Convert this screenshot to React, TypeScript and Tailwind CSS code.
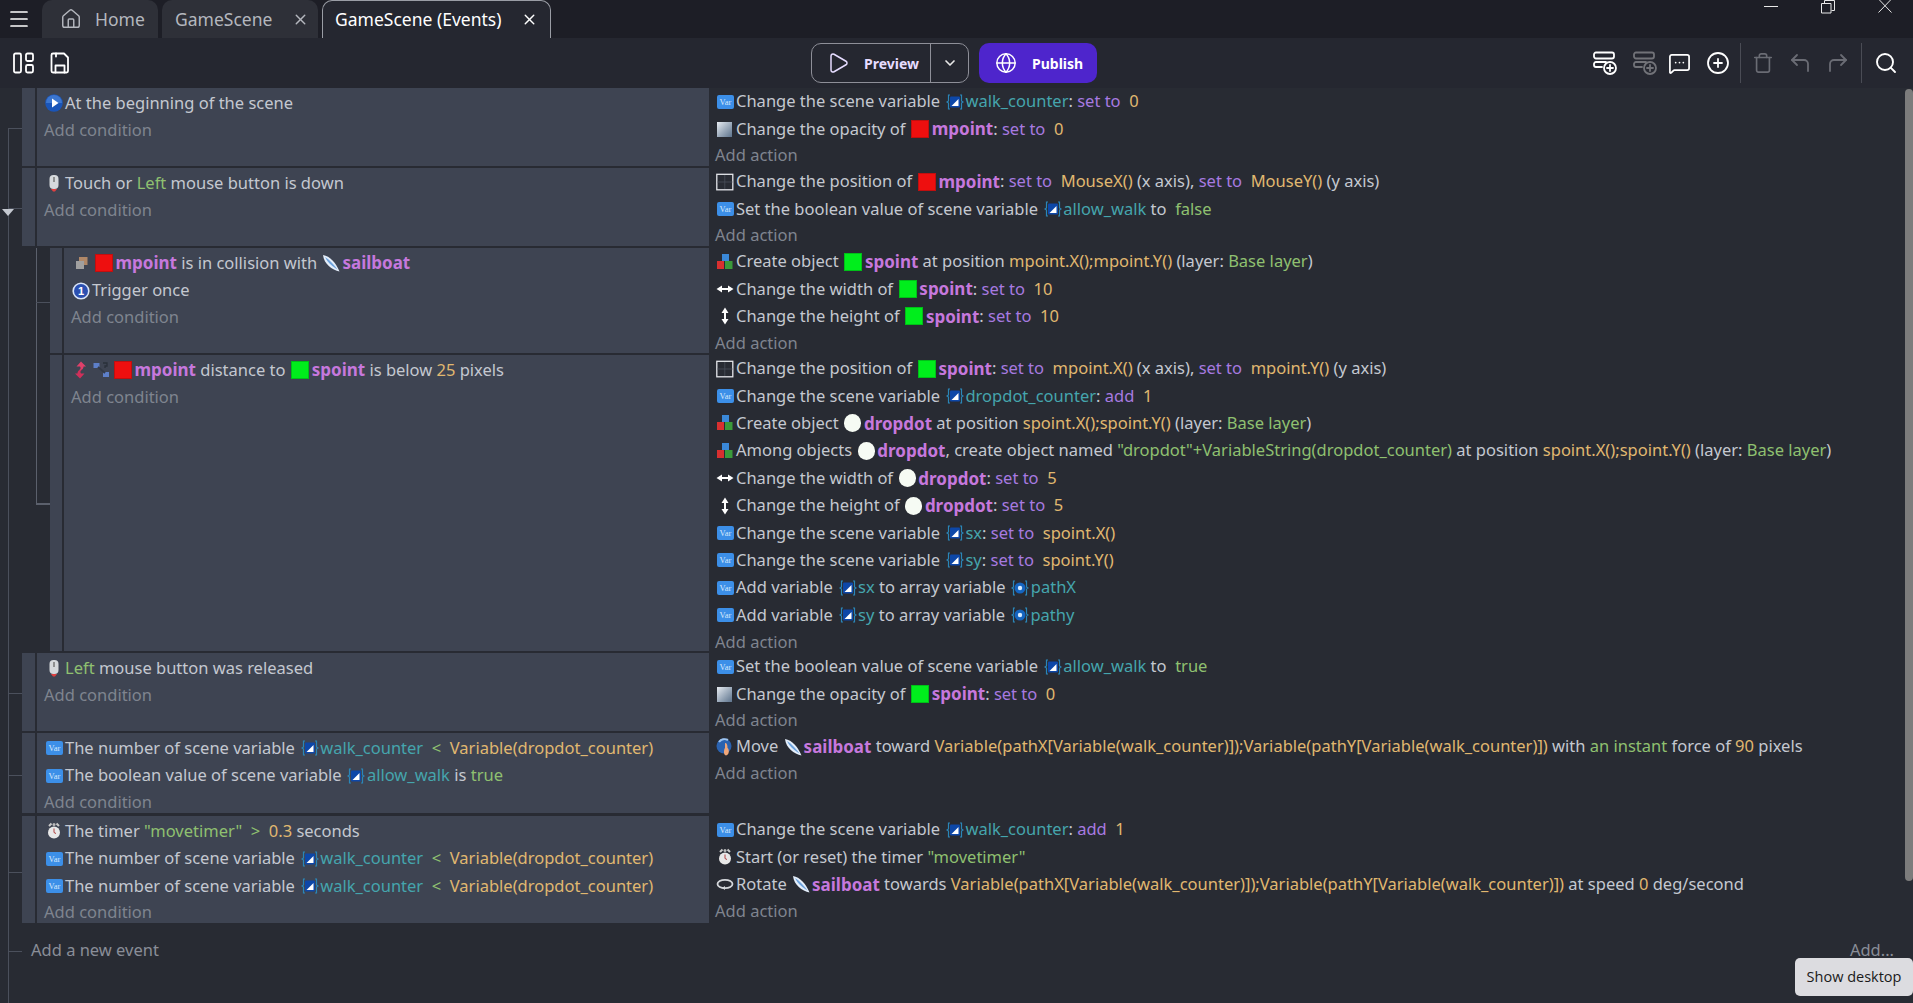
import React from "react";
import { Menu, Home, X, Play, ChevronDown, Globe, Search, Trash, CornerUpLeft, CornerUpRight, CirclePlus, MessageSquareMore } from "lucide-react";

type P = { children?: React.ReactNode };
const O = ({ children }: P) => <span className="font-bold text-[17px] text-[#c678dd]">{children}</span>;
const V = ({ children }: P) => <span className="text-[#a77ae0]">{children}</span>;
const N = ({ children }: P) => <span className="text-[#e0b870]">{children}</span>;
const G = ({ children }: P) => <span className="text-[#8fc070]">{children}</span>;
const C = ({ children }: P) => <span className="text-[#45a5ad]">{children}</span>;

const Box = ({ w = 18, children }: { w?: number; children: React.ReactNode }) => (
  <svg width={w} height="18" viewBox={`0 0 ${w} 18`} className="shrink-0">{children}</svg>
);
const VarI = () => (
  <span className="shrink-0 w-[17px] h-[14px] mr-[2px] ml-[2px] rounded-[2px] bg-[#3c8fe8] text-[#d8e8fb] text-[8.5px] leading-[14px] text-center font-['Liberation_Serif',serif]">Var</span>
);
const Ref = () => (
  <span className="shrink-0 ml-[1.5px] mr-[1.5px] flex">
    <Box>
      <path d="M4 2H2.500V8L1 9l1.500 1v6H4M14 2h1.500V8L17 9l-1.500 1v6H14" fill="none" stroke="#2a86b8" strokeWidth="1.200" />
      <rect x="4" y="3.500" width="10" height="11" rx="1" fill="#0d47a8" />
      <path d="M5.500 13l7-7v7z" fill="#ffffff" />
    </Box>
  </span>
);
const Arr = () => (
  <span className="shrink-0 ml-[1.5px] mr-[1.5px] flex">
    <Box>
      <path d="M4 2H2.500V8L1 9l1.500 1v6H4M14 2h1.500V8L17 9l-1.500 1v6H14" fill="none" stroke="#2a86b8" strokeWidth="1.200" />
      <circle cx="9" cy="9" r="5.500" fill="#1565c0" />
      <circle cx="9" cy="9" r="2.200" fill="#d8ecff" />
    </Box>
  </span>
);
const Obj = ({ c }: { c: "r" | "g" }) => (
  <span className={`shrink-0 w-[18px] h-[18px] ml-[1.5px] mr-[2.5px] border ${c === "r" ? "bg-[#ee0f0f] border-[#c00f0f]" : "bg-[#00ee1c] border-[#00c018]"}`} />
);
const Dot = () => <span className="shrink-0 w-[17px] h-[18px] ml-[1.5px] mr-[2.5px] rounded-full bg-[#f6fbf4]" />;
const Boat = () => (
  <span className="shrink-0 mr-[2px] ml-[1px] flex">
    <Box>
      <path d="M1 1C8 2 14 9 17.500 17.500C10 16 2 10 1 1z" fill="#e4eefa" />
      <path d="M3 3C8 6 12 11 15.500 15.500C11 13 6 9 3 3z" fill="#6fa4de" />
    </Box>
  </span>
);
const Start = () => (
  <span className="shrink-0 ml-[1px] mr-[2px] flex">
    <Box>
      <circle cx="9" cy="9" r="8.800" fill="#1a55b8" />
      <path d="M1 9a8 8 0 0 1 16 0" fill="#5d98e6" opacity=".5" />
      <path d="M7 4.500l6.500 4.500L7 13.500z" fill="#fff" />
    </Box>
  </span>
);
const Mouse = () => (
  <span className="shrink-0 ml-[1px] mr-[2px] flex">
    <Box>
      <rect x="4.500" y="1" width="9" height="14" rx="4" fill="#d6d9dc" />
      <path d="M9 3v5" stroke="#777" strokeWidth="1.500" />
      <path d="M6 15h6l-2 2.500H8z" fill="#e04040" />
    </Box>
  </span>
);
const Collide = () => (
  <span className="shrink-0 ml-[4px] mr-[4.5px] flex">
    <Box w={14}>
      <rect x="4" y="3" width="8.500" height="8" fill="#b08868" />
      <rect x="1" y="7" width="8" height="8" fill="#a0a0a0" />
    </Box>
  </span>
);
const Once = () => (
  <span className="shrink-0 ml-[1px] mr-[2px] flex">
    <Box>
      <circle cx="9" cy="9" r="8.600" fill="#d8e4f8" />
      <circle cx="9" cy="9" r="7" fill="#2a4fb0" />
      <text x="9" y="13" textAnchor="middle" fontSize="11" fontWeight="700" fill="#fff" fontFamily="Liberation Sans, sans-serif">1</text>
    </Box>
  </span>
);
const Dist = () => (
  <span className="shrink-0 ml-[2px] mr-[3.5px] flex gap-[5px]">
    <Box w={15}>
      <path d="M8 0.500l5 5h-2.500c0 2-1.500 4-5 4C8 8 8 7 7 5.500H3.500z" fill="#e0406a" />
      <path d="M7 17.500l-5-5h2.500c0-2 1.500-4 5-4C7 10 7 11 8 12.500h3.500z" fill="#d0305a" />
    </Box>
    <Box w={16}>
      <rect x="0.500" y="2" width="6" height="5" fill="#5d7fc8" />
      <rect x="10" y="11" width="6" height="5" fill="#5d7fc8" />
      <path d="M5 6l7 6" stroke="#333a46" strokeWidth="2" />
      <path d="M10 2h4v3h-2v2" fill="none" stroke="#2a303a" strokeWidth="1.300" />
    </Box>
  </span>
);
const Opacity = () => (
  <span className="shrink-0 ml-[2px] mr-[4px] w-[15px] h-[15px] bg-gradient-to-br from-[#e8edf2] to-[#5d738c]" />
);
const Pos = () => (
  <span className="shrink-0 ml-[1px] mr-[2px] flex">
    <Box>
      <rect x="0.800" y="1.300" width="16" height="15.500" fill="none" stroke="#e4e6ea" strokeWidth="1.300" />
      <path d="M8.800 2v14M1.500 9h15" stroke="#4a4f5a" strokeWidth=".8" />
    </Box>
  </span>
);
const Create = () => (
  <span className="shrink-0 ml-[1px] mr-[2px] flex">
    <Box>
      <rect x="6" y="1" width="7" height="7" fill="#3a88d8" />
      <rect x="1" y="8" width="7" height="8" fill="#d83030" />
      <rect x="9" y="8" width="7.500" height="8" fill="#3a9a3a" />
    </Box>
  </span>
);
const W = () => (
  <span className="shrink-0 ml-[1px] mr-[2px] flex">
    <Box>
      <path d="M5 9h8" stroke="#fff" strokeWidth="2" />
      <path d="M0.500 9L6 5.500v7zM17.500 9L12 5.500v7z" fill="#fff" />
    </Box>
  </span>
);
const H = () => (
  <span className="shrink-0 ml-[1px] mr-[2px] flex">
    <Box>
      <path d="M9 5v8" stroke="#fff" strokeWidth="2" />
      <path d="M9 0.500L5.500 6h7zM9 17.500L5.500 12h7z" fill="#fff" />
    </Box>
  </span>
);
const MoveI = () => (
  <span className="shrink-0 ml-[1px] mr-[2px] flex">
    <Box>
      <circle cx="8" cy="8" r="7.500" fill="#2a62b0" />
      <path d="M3 4a7 7 0 0 1 9-2" stroke="#9cc2ee" strokeWidth="2" fill="none" />
      <path d="M9 5c2 0 2.500 2 2.500 5c2 1 2 7-1.500 7.500C7 17 8 11 9 10z" fill="#f0a678" />
    </Box>
  </span>
);
const Rot = () => (
  <span className="shrink-0 ml-[1px] mr-[2px] flex">
    <Box>
      <ellipse cx="9" cy="9" rx="7.500" ry="4.200" fill="none" stroke="#d5d8dc" strokeWidth="1.800" />
      <path d="M6 13l3-2v4z" fill="#d5d8dc" />
    </Box>
  </span>
);
const Clock = () => (
  <span className="shrink-0 ml-[1px] mr-[2px] flex">
    <Box>
      <path d="M4 4l2.500-2.500M14 4l-2.500-2.500" stroke="#c8c8c8" strokeWidth="2" />
      <circle cx="9" cy="10.500" r="6" fill="#e8e8e8" />
      <path d="M9 6.500v4l2 1" fill="none" stroke="#b04040" strokeWidth="1" />
      <circle cx="9" cy="2.500" r="1.500" fill="#bbb" />
    </Box>
  </span>
);

const CL = ({ children }: P) => <div className="flex items-center h-[27.4px] whitespace-pre">{children}</div>;
const AddL = ({ children }: P) => <div className="flex items-center h-[26px] text-[#7f848f]">{children}</div>;

const Row = ({
  sub = false,
  h,
  mb = "mb-[2px]",
  conds,
  acts,
}: {
  sub?: boolean;
  h: string;
  mb?: string;
  conds: React.ReactNode;
  acts: React.ReactNode;
}) => (
  <div className={`flex ${h} ${mb}`}>
    <div className={`w-[709px] shrink-0 flex gap-[2px] ${sub ? "pl-[50px]" : "pl-[22px]"}`}>
      <div className={`${sub ? "w-[12px]" : "w-[13px]"} bg-[#3e4452]`} />
      <div className="flex-1 min-w-0 bg-[#3e4452] pl-[7px] pt-[1.5px]">
        {conds}
        <AddL>Add condition</AddL>
      </div>
    </div>
    <div className="flex-1 min-w-0 pl-[6px]">
      {acts}
      <AddL>Add action</AddL>
    </div>
  </div>
);

const NumWalk = () => (
  <CL>
    <VarI />
    The number of scene variable <Ref /><C>walk_counter</C>
    <G>{"  <  "}</G>
    <N>Variable(dropdot_counter)</N>
  </CL>
);
const Svg24 = ({ children, op = 1 }: { children: React.ReactNode; op?: number }) => (
  <svg width="24" height="24" viewBox="0 0 24 24" fill="none" stroke="currentColor" strokeWidth="1.800" strokeLinecap="round" strokeLinejoin="round" opacity={op}>
    {children}
  </svg>
);
const AddEv = () => (
  <>
    <rect x="1" y="1.500" width="20" height="6" rx="2" />
    <path d="M13 11H3a2 2 0 0 0-2 2v1a2 2 0 0 0 2 2h6" />
    <circle cx="17" cy="17" r="6" />
    <path d="M17 14v6M14 17h6" />
  </>
);

export default function App() {
  return (
    <div className="h-screen w-full overflow-hidden flex flex-col bg-[#282b33] text-[#c4c8d0] text-[16.5px] font-['Noto_Sans','Open_Sans',sans-serif] relative">
      {/* title bar */}
      <div className="h-[38px] shrink-0 bg-[#1d1e26] flex items-start text-[17.5px]">
        <div className="w-[42px] h-[38px] flex items-center pl-[7px] text-white">
          <Menu size={24} strokeWidth={1.7} />
        </div>
        <div className="flex gap-[4px]">
          <div className="w-[116px] h-[38px] shrink-0 flex items-center rounded-t-[10px] bg-[#2e3038] text-[#b4b7be]">
            <span className="ml-[18px] mr-[13px] flex"><Home size={22} strokeWidth={1.600} /></span>
            Home
          </div>
          <div className="w-[156px] h-[38px] shrink-0 flex items-center rounded-t-[10px] bg-[#2e3038] text-[#b4b7be] pl-[13px]">
            GameScene
            <X size={17} className="ml-[20px]" />
          </div>
          <div className="w-[229px] h-[38px] shrink-0 flex items-center rounded-t-[10px] bg-[#252730] border border-b-0 border-[#9a9da5] text-white pl-[12px]">
            GameScene (Events)
            <X size={17} className="ml-[20px]" />
          </div>
        </div>
        <div className="ml-auto flex items-start text-[#e8e8e8] pr-[21px] gap-[43px]">
          <svg width="14" height="14" viewBox="0 0 14 14"><path d="M0 6.500h14" stroke="currentColor" strokeWidth="1" /></svg>
          <svg width="14" height="14" viewBox="0 0 14 14"><path d="M.5 3.500h9.500v9.500H.5zM3.500 3V.5H13.500V10.500H10.500" fill="none" stroke="currentColor" strokeWidth="1" /></svg>
          <svg width="14" height="14" viewBox="0 0 14 14"><path d="M.5 -1L13.500 12.500M13.500 -1L.5 12.500" stroke="currentColor" strokeWidth="1" /></svg>
        </div>
      </div>
      {/* toolbar */}
      <div className="h-[50px] shrink-0 bg-[#252730] flex items-center relative text-white">
        <div className="flex items-center pl-[11px] gap-[13px]">
          <Svg24>
            <rect x="3" y="2.500" width="7" height="19" rx="1.500" />
            <rect x="15" y="2.500" width="7" height="7.500" rx="1.500" />
            <rect x="15" y="14" width="7" height="7.500" rx="1.500" />
          </Svg24>
          <Svg24>
            <path d="M5 2.500h11l4 4V20a1.500 1.500 0 0 1-1.500 1.500h-13.500A1.500 1.500 0 0 1 3.500 20V4A1.500 1.500 0 0 1 5 2.500z" />
            <path d="M7.500 21.500v-7h9v7M8 2.500v3" />
          </Svg24>
        </div>
        <div className="absolute left-[811px] top-[5px] flex gap-[10px]">
          <div className="w-[158px] h-[40px] rounded-[10px] border border-[#8e8f98] flex items-center">
            <div className="w-[119px] h-full flex items-center pl-[14px] gap-[14px] border-r border-[#8e8f98] text-[#e6dcff]">
              <Play size={24} strokeWidth={1.500} />
              <span className="text-[14px] font-bold">Preview</span>
            </div>
            <div className="flex-1 flex justify-center text-[#e8e8e8]"><ChevronDown size={16} strokeWidth={2.500} /></div>
          </div>
          <div className="w-[118px] h-[40px] rounded-[10px] bg-[#4e25cc] flex items-center pl-[16px] gap-[15px]">
            <Globe size={22} strokeWidth={1.600} />
            <span className="text-[14px] font-bold">Publish</span>
          </div>
        </div>
        <div className="ml-auto flex items-center pr-[15px] h-[40px]">
          <div className="flex items-center pr-[10px] border-r border-[#4a4c55] h-full">
            <Svg24><AddEv /></Svg24>
            <span className="opacity-35 flex ml-[16px]"><Svg24><AddEv /></Svg24></span>
            <MessageSquareMore size={23} strokeWidth={1.800} className="ml-[11px]" />
            <CirclePlus size={24} strokeWidth={1.800} className="ml-[15px]" />
          </div>
          <div className="flex items-center gap-[14px] px-[11px] border-r border-[#4a4c55] h-full text-[#6a6c74]">
            <Trash size={22} strokeWidth={1.800} />
            <CornerUpLeft size={24} strokeWidth={1.800} />
            <CornerUpRight size={24} strokeWidth={1.800} />
          </div>
          <Search size={24} strokeWidth={1.900} className="ml-[12px]" />
        </div>
      </div>
      {/* sheet */}
      <div className="flex-1 min-h-0 flex relative">
        <div className="flex-1 min-w-0 relative">
          {/* tree connectors */}
          <div className="absolute left-[8px] top-[40px] bottom-0 w-px bg-[#4b505c]" />
          <div className="absolute left-[8px] top-[40px] w-[14px] h-px bg-[#4b505c]" />
          <div className="absolute left-[8px] top-[120px] w-[14px] h-px bg-[#4b505c]" />
          <div className="absolute left-[2px] top-[121px] border-x-[6px] border-x-transparent border-t-[7px] border-t-[#c4c8d0]" />
          <div className="absolute left-[36px] top-[160px] w-[14px] h-[257px] border-l border-b-2 border-[#5b606c]" />
          <div className="absolute left-[36px] top-[214px] w-[14px] h-px bg-[#4b505c]" />
          <div className="absolute left-[8px] top-[605px] w-[14px] h-px bg-[#4b505c]" />
          <div className="absolute left-[8px] top-[687px] w-[14px] h-px bg-[#4b505c]" />
          <div className="absolute left-[8px] top-[784px] w-[14px] h-px bg-[#4b505c]" />
          <div className="absolute left-[8px] top-[863px] w-[14px] h-px bg-[#4b505c]" />

          <Row
            h="h-[78px]"
            conds={<CL><Start />At the beginning of the scene</CL>}
            acts={
              <>
                <CL><VarI />Change the scene variable <Ref /><C>walk_counter</C>: <V>set to </V><N> 0</N></CL>
                <CL><Opacity />Change the opacity of <Obj c="r" /><O>mpoint</O>: <V>set to </V><N> 0</N></CL>
              </>
            }
          />
          <Row
            h="h-[78px]"
            conds={<CL><Mouse />Touch or <G>Left</G> mouse button is down</CL>}
            acts={
              <>
                <CL><Pos />Change the position of <Obj c="r" /><O>mpoint</O>: <V>set to </V><N> MouseX()</N> (x axis), <V>set to </V><N> MouseY()</N> (y axis)</CL>
                <CL><VarI />Set the boolean value of scene variable <Ref /><C>allow_walk</C> to <G> false</G></CL>
              </>
            }
          />
          <Row
            sub
            h="h-[105px]"
            conds={
              <>
                <CL><Collide /><Obj c="r" /><O>mpoint</O> is in collision with <Boat /><O>sailboat</O></CL>
                <CL><Once />Trigger once</CL>
              </>
            }
            acts={
              <>
                <CL><Create />Create object <Obj c="g" /><O>spoint</O> at position <N>mpoint.X();mpoint.Y()</N> (layer: <G>Base layer</G>)</CL>
                <CL><W />Change the width of <Obj c="g" /><O>spoint</O>: <V>set to </V><N> 10</N></CL>
                <CL><H />Change the height of <Obj c="g" /><O>spoint</O>: <V>set to </V><N> 10</N></CL>
              </>
            }
          />
          <Row
            sub
            h="h-[296px]"
            conds={<CL><Dist /><Obj c="r" /><O>mpoint</O> distance to <Obj c="g" /><O>spoint</O> is below <N>25</N> pixels</CL>}
            acts={
              <>
                <CL><Pos />Change the position of <Obj c="g" /><O>spoint</O>: <V>set to </V><N> mpoint.X()</N> (x axis), <V>set to </V><N> mpoint.Y()</N> (y axis)</CL>
                <CL><VarI />Change the scene variable <Ref /><C>dropdot_counter</C>: <V>add </V><N> 1</N></CL>
                <CL><Create />Create object <Dot /><O>dropdot</O> at position <N>spoint.X();spoint.Y()</N> (layer: <G>Base layer</G>)</CL>
                <CL><Create />Among objects <Dot /><O>dropdot</O>, create object named <G>"dropdot"+VariableString(dropdot_counter)</G> at position <N>spoint.X();spoint.Y()</N> (layer: <G>Base layer</G>)</CL>
                <CL><W />Change the width of <Dot /><O>dropdot</O>: <V>set to </V><N> 5</N></CL>
                <CL><H />Change the height of <Dot /><O>dropdot</O>: <V>set to </V><N> 5</N></CL>
                <CL><VarI />Change the scene variable <Ref /><C>sx</C>: <V>set to </V><N> spoint.X()</N></CL>
                <CL><VarI />Change the scene variable <Ref /><C>sy</C>: <V>set to </V><N> spoint.Y()</N></CL>
                <CL><VarI />Add variable <Ref /><C>sx</C> to array variable <Arr /><C>pathX</C></CL>
                <CL><VarI />Add variable <Ref /><C>sy</C> to array variable <Arr /><C>pathy</C></CL>
              </>
            }
          />
          <Row
            h="h-[78px]"
            conds={<CL><Mouse /><G>Left</G> mouse button was released</CL>}
            acts={
              <>
                <CL><VarI />Set the boolean value of scene variable <Ref /><C>allow_walk</C> to <G> true</G></CL>
                <CL><Opacity />Change the opacity of <Obj c="g" /><O>spoint</O>: <V>set to </V><N> 0</N></CL>
              </>
            }
          />
          <Row
            h="h-[80px]"
            mb="mb-[3px]"
            conds={
              <>
                <NumWalk />
                <CL><VarI />The boolean value of scene variable <Ref /><C>allow_walk</C> is <G>true</G></CL>
              </>
            }
            acts={
              <CL><MoveI />Move <Boat /><O>sailboat</O> toward <N>Variable(pathX[Variable(walk_counter)]);Variable(pathY[Variable(walk_counter)])</N> with <G>an instant</G> force of <N>90</N> pixels</CL>
            }
          />
          <Row
            h="h-[107px]"
            conds={
              <>
                <CL><Clock />The timer <G>"movetimer"</G><G>{"  >  "}</G><N>0.3</N> seconds</CL>
                <NumWalk />
                <NumWalk />
              </>
            }
            acts={
              <>
                <CL><VarI />Change the scene variable <Ref /><C>walk_counter</C>: <V>add </V><N> 1</N></CL>
                <CL><Clock />Start (or reset) the timer <G>"movetimer"</G></CL>
                <CL><Rot />Rotate <Boat /><O>sailboat</O> towards <N>Variable(pathX[Variable(walk_counter)]);Variable(pathY[Variable(walk_counter)])</N> at speed <N>0</N> deg/second</CL>
              </>
            }
          />
          <div className="flex justify-between pl-[31px] pr-[11px] pt-[13px] text-[#8a8e98]">
            <span>Add a new event</span>
            <span>Add...</span>
          </div>
        </div>
        {/* scrollbar */}
        <div className="w-[8px] shrink-0">
          <div className="h-[792px] mt-[1px] bg-[#7c7c7c] rounded-[4px]" />
        </div>
      </div>
      {/* tooltip */}
      <div className="absolute left-[1795px] top-[958px] w-[118px] h-[38px] bg-[#dcdce0] rounded-[5px] text-[#1a1a1a] text-[14.5px] flex items-center justify-center font-['Open_Sans',sans-serif]">
        Show desktop
      </div>
    </div>
  );
}
